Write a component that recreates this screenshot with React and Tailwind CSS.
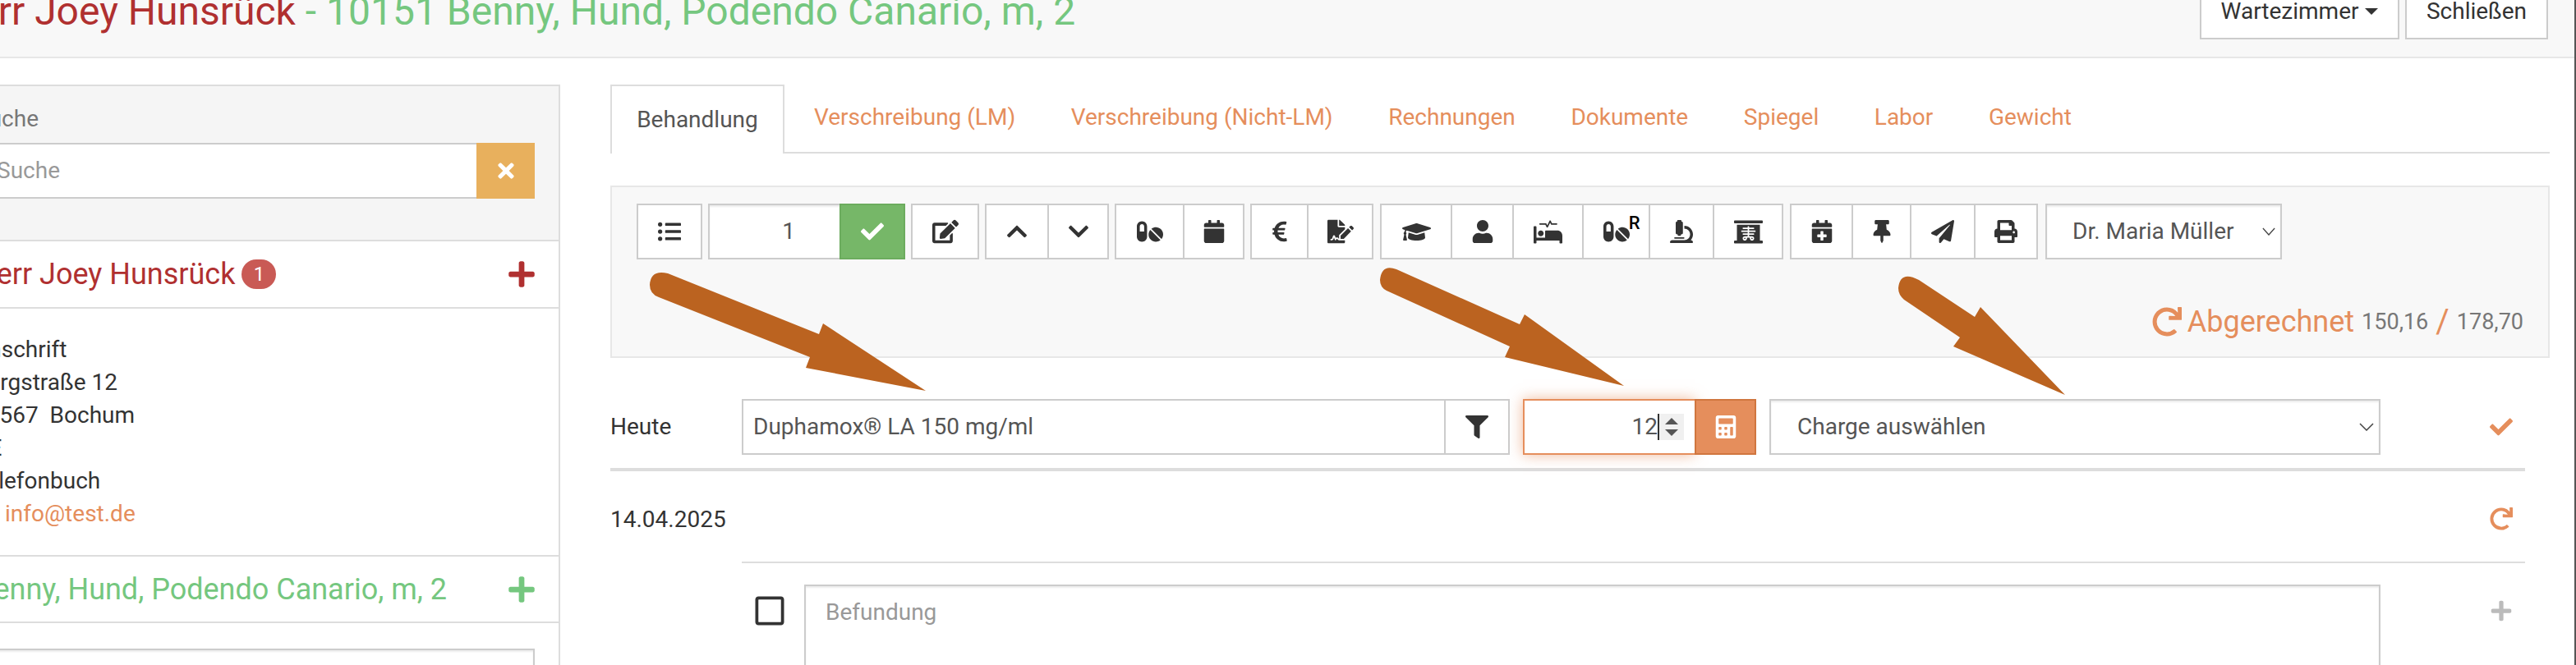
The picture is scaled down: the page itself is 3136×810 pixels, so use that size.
import {
  FaListUl, FaCheck, FaEdit, FaChevronUp, FaChevronDown, FaPills, FaCalendar, FaEuroSign, FaFileSignature,
  FaGraduationCap, FaUser, FaProcedures, FaMicroscope, FaXRay, FaCalendarPlus, FaThumbtack, FaPaperPlane,
  FaPrint, FaFilter, FaCalculator, FaRedo, FaPlus, FaTimes, FaRegSquare,
} from 'react-icons/fa';

const rahmen = 'border-2 border-[#ccc]';

function Gruppe({ spalten, className = '' }) {
  return (
    <div className={`flex h-[68px] bg-white ${rahmen} ${className}`}>
      {spalten.map(([breite, inhalt], i) => (
        <div key={i} className={`${breite} flex items-center justify-center text-[#333] text-[28px] ${i > 0 ? 'border-l-2 border-[#ccc]' : ''}`}>
          {inhalt}
        </div>
      ))}
    </div>
  );
}

function Chevron({ breite }) {
  return (
    <svg width={breite} height="10" viewBox="0 0 18 10" fill="none" stroke="#444" strokeWidth="1.5" preserveAspectRatio="none">
      <path d="M1 1l8 8 8-8" />
    </svg>
  );
}

function Pfeile() {
  return (
    <svg className="absolute left-0 top-0 pointer-events-none" width="3136" height="810" viewBox="0 0 3136 810" fill="#bb6320">
      <path d="M813 333L997 407L1002 394L1127 476L981 448L986 435L802 362Q791 358 791 347Q792 328 813 333Z" />
      <path d="M1700 328L1850 395L1856 383L1977 470L1832 435L1838 422L1688 354Q1680 350 1680 341Q1682 321 1700 328Z" />
      <path d="M2336 341L2404 386L2411 374L2514 481L2378 422L2386 411L2318 365Q2311 359 2311 351Q2313 329 2336 341Z" />
    </svg>
  );
}

export default function App() {
  return (
    <div className="relative w-[3136px] h-[810px] overflow-hidden bg-white font-['Roboto',sans-serif] text-[28px] text-[#333]">
      <div className="h-[71px] bg-[#f8f8f8] border-b-2 border-[#e7e7e7] flex justify-between pr-[34px]">
        <div className="text-[48px] leading-[52px] -mt-[12px] -ml-[62px] whitespace-nowrap">
          <span className="text-[#b03030]">Herr Joey Hunsrück</span>
          <span className="text-[#75c77f]"> - 10151 Benny, Hund, Podendo Canario, m, 2</span>
        </div>
        <div className="flex gap-[7px] -mt-[20px]">
          <div className={`w-[243px] h-[68px] bg-white ${rahmen} flex items-center justify-center gap-[8px]`}>
            Wartezimmer
            <span className="w-0 h-0 border-x-[8px] border-t-[8px] border-x-transparent border-t-[#333]"></span>
          </div>
          <div className={`w-[174px] h-[68px] bg-white ${rahmen} flex items-center justify-center`}>Schließen</div>
        </div>
      </div>

      <div className="flex pt-[32px]">
        <div className="w-[684px] shrink-0 -ml-[2px]">
          <div className="ml-[-60px] w-[744px] border-2 border-[#ddd]">
            <div className="h-[189px] bg-[#f5f5f5] border-b-2 border-[#ddd] pl-[30px] pr-[29px]">
              <div className="h-[69px] pt-[20px] leading-[40px] text-[#777]">Suche</div>
              <div className="flex h-[68px]">
                <div className="flex-1 bg-white border-y-2 border-[#ccc] flex items-center pl-[26px] text-[#999]">Suche</div>
                <div className="w-[71px] bg-[#e8b05d] text-white text-[28px] flex items-center justify-center"><FaTimes /></div>
              </div>
            </div>
            <div className="h-[82px] border-b-2 border-[#ddd] flex items-center justify-between pl-[30px] pr-[27px]">
              <div className="flex items-center gap-[8px] text-[36px] text-[#b03030]">
                Herr Joey Hunsrück
                <span className="w-[42px] h-[36px] rounded-full bg-[#c95a55] text-white text-[24px] flex items-center justify-center">1</span>
              </div>
              <FaPlus className="text-[#b03030] text-[36px]" />
            </div>
            <div className="h-[302px] border-b-2 border-[#ddd] pl-[28px] pt-[30px] leading-[40px]">
              <div>Anschrift</div>
              <div>Bergstraße 12</div>
              <div>34567&nbsp; Bochum</div>
              <div>DE</div>
              <div>Telefonbuch</div>
              <div className="text-[#e58e5c]"><span className="inline-block w-[38px]"></span>info@test.de</div>
            </div>
            <div className="h-[81px] border-b-2 border-[#ddd] flex items-center justify-between pl-[30px] pr-[27px]">
              <div className="text-[36px] text-[#75c77f]">Benny, Hund, Podendo Canario, m, 2</div>
              <FaPlus className="text-[#75c77f] text-[36px]" />
            </div>
            <div className="pl-[30px] pr-[29px] pt-[31px]">
              <div className={`h-[60px] ${rahmen} shadow-[inset_0_2px_2px_rgba(0,0,0,0.075)]`}></div>
            </div>
          </div>
        </div>

        <div className="w-[2361px] ml-[61px]">
          <div className="h-[84px] border-b-2 border-[#ddd] flex text-[#e58e5c]">
            <div className="w-[212px] h-[84px] bg-white border-2 border-b-0 border-[#ddd] text-[#555] flex items-center justify-center">Behandlung</div>
            <div className="flex items-center pl-[36px] gap-[67.6px] h-[80px]">
              <span>Verschreibung (LM)</span>
              <span>Verschreibung (Nicht-LM)</span>
              <span>Rechnungen</span>
              <span>Dokumente</span>
              <span>Spiegel</span>
              <span>Labor</span>
              <span>Gewicht</span>
            </div>
          </div>

          <div className="mt-[39px] h-[210px] bg-[#f8f8f8] border-2 border-[#e7e7e7] px-[30px] pt-[20px]">
            <div className="flex gap-[7px]">
              <Gruppe spalten={[['w-[76px]', <FaListUl />]]} />
              <div className="flex h-[68px]">
                <div className={`w-[160px] bg-white ${rahmen} border-r-0 shadow-[inset_0_2px_2px_rgba(0,0,0,0.075)] flex items-center justify-center pl-[34px] text-[#555]`}>1</div>
                <div className="w-[80px] bg-[#76b768] border-2 border-[#6cac5e] text-white text-[28px] flex items-center justify-center"><FaCheck /></div>
              </div>
              <Gruppe spalten={[['w-[79px]', <FaEdit className="text-[32px]" />]]} />
              <Gruppe spalten={[['w-[74px]', <FaChevronUp />], ['w-[73px]', <FaChevronDown />]]} />
              <Gruppe spalten={[['w-[81px]', <FaPills className="text-[32px]" />], ['w-[73px]', <FaCalendar />]]} />
              <Gruppe spalten={[['w-[67px]', <FaEuroSign />], ['w-[79px]', <FaFileSignature className="text-[32px]" />]]} />
              <Gruppe className="ml-[1px]" spalten={[
                ['w-[84px]', <FaGraduationCap className="text-[35px]" />],
                ['w-[75px]', <FaUser />],
                ['w-[85px]', <FaProcedures className="text-[35px]" />],
                ['w-[81px]', <span className="relative"><FaPills className="text-[32px]" /><span className="absolute -right-[13px] -top-[5px] text-[22px] leading-none font-medium text-black">R</span></span>],
                ['w-[78px]', <FaMicroscope />],
                ['w-[84px]', <FaXRay className="text-[35px]" />],
              ]} />
              <Gruppe className="ml-[1px]" spalten={[
                ['w-[73px]', <FaCalendarPlus />],
                ['w-[71px]', <FaThumbtack />],
                ['w-[78px]', <FaPaperPlane />],
                ['w-[76px]', <FaPrint />],
              ]} />
              <div className={`ml-[2px] w-[288px] h-[68px] bg-white ${rahmen} shadow-[inset_0_2px_2px_rgba(0,0,0,0.075)] flex items-center justify-between pl-[31px] pr-[6px] text-[#555]`}>
                Dr. Maria Müller
                <Chevron breite={16} />
              </div>
            </div>
            <div className="flex items-center justify-end mt-[56px] gap-[9px]">
              <FaRedo className="text-[#e58e5c] text-[36px] -mr-[2px]" />
              <span className="text-[36px] leading-[40px] text-[#e58e5c]">Abgerechnet</span>
              <span className="text-[#777] text-[27px]">150,16</span>
              <span className="text-[#e58e5c] text-[40px] leading-[40px]">/</span>
              <span className="text-[#777] text-[27px]">178,70</span>
            </div>
          </div>

          <div className="w-[2331px] mt-[50px] h-[88px] border-b-4 border-[#ddd] flex">
            <div className="w-[160px] pt-[14px] leading-[40px]">Heute</div>
            <div className={`w-[855px] h-[68px] ${rahmen} border-r-0 flex items-center pl-[12px] text-[#555]`}>Duphamox® LA 150 mg/ml</div>
            <div className={`w-[80px] h-[68px] ${rahmen} flex items-center justify-center text-[28px]`}><FaFilter /></div>
            <div className="ml-[16px] flex h-[68px]">
              <div className="w-[209px] border-2 border-r-0 border-[#e58e5c] shadow-[0_0_16px_rgba(229,142,92,0.6)] flex items-center justify-end pr-[13px] text-[#555]">
                <span className="border-r-2 border-[#333] leading-[32px]">12</span>
                <span className="w-[30px] h-[32px] bg-[#f0f0f0] flex flex-col items-center justify-center gap-[6px]">
                  <span className="w-0 h-0 border-x-[8px] border-b-[8px] border-x-transparent border-b-[#555]"></span>
                  <span className="w-0 h-0 border-x-[8px] border-t-[8px] border-x-transparent border-t-[#555]"></span>
                </span>
              </div>
              <div className="w-[75px] bg-[#e58e5c] border-2 border-[#d0763f] text-white text-[28px] flex items-center justify-center"><FaCalculator /></div>
            </div>
            <div className={`ml-[16px] w-[744px] h-[68px] ${rahmen} shadow-[inset_0_2px_2px_rgba(0,0,0,0.075)] flex items-center justify-between pl-[32px] pr-[6px] text-[#555]`}>
              Charge auswählen
              <Chevron breite={18} />
            </div>
            <div className="flex-1 flex justify-end pt-[20px] pr-[15px] text-[#e58e5c] text-[28px]"><FaCheck /></div>
          </div>

          <div className="w-[2331px] flex h-[110px] leading-[40px] pt-[39px]">
            <div className="flex-1">14.04.2025</div>
            <FaRedo className="text-[#e58e5c] text-[28px] mt-[5px] mr-[15px]" />
          </div>

          <div className="w-[2331px] pl-[160px]">
            <div className="border-t-2 border-[#ddd] pt-[26px] flex">
              <FaRegSquare className="text-[40px] ml-[14px] mt-[12px] shrink-0" />
              <div className="ml-[22px] w-[1919px] h-[200px] border-2 border-[#ccc] shadow-[inset_0_2px_2px_rgba(0,0,0,0.075)] pl-[24px] pt-[12px] leading-[40px] text-[#999]">Befundung</div>
              <div className="flex-1 flex justify-end pt-[18px] pr-[15px] text-[#bbb] text-[28px]"><FaPlus /></div>
            </div>
          </div>
        </div>
      </div>

      <div className="absolute right-0 top-0 w-[2px] h-[810px] bg-[#555]"></div>
      <Pfeile />
    </div>
  );
}
